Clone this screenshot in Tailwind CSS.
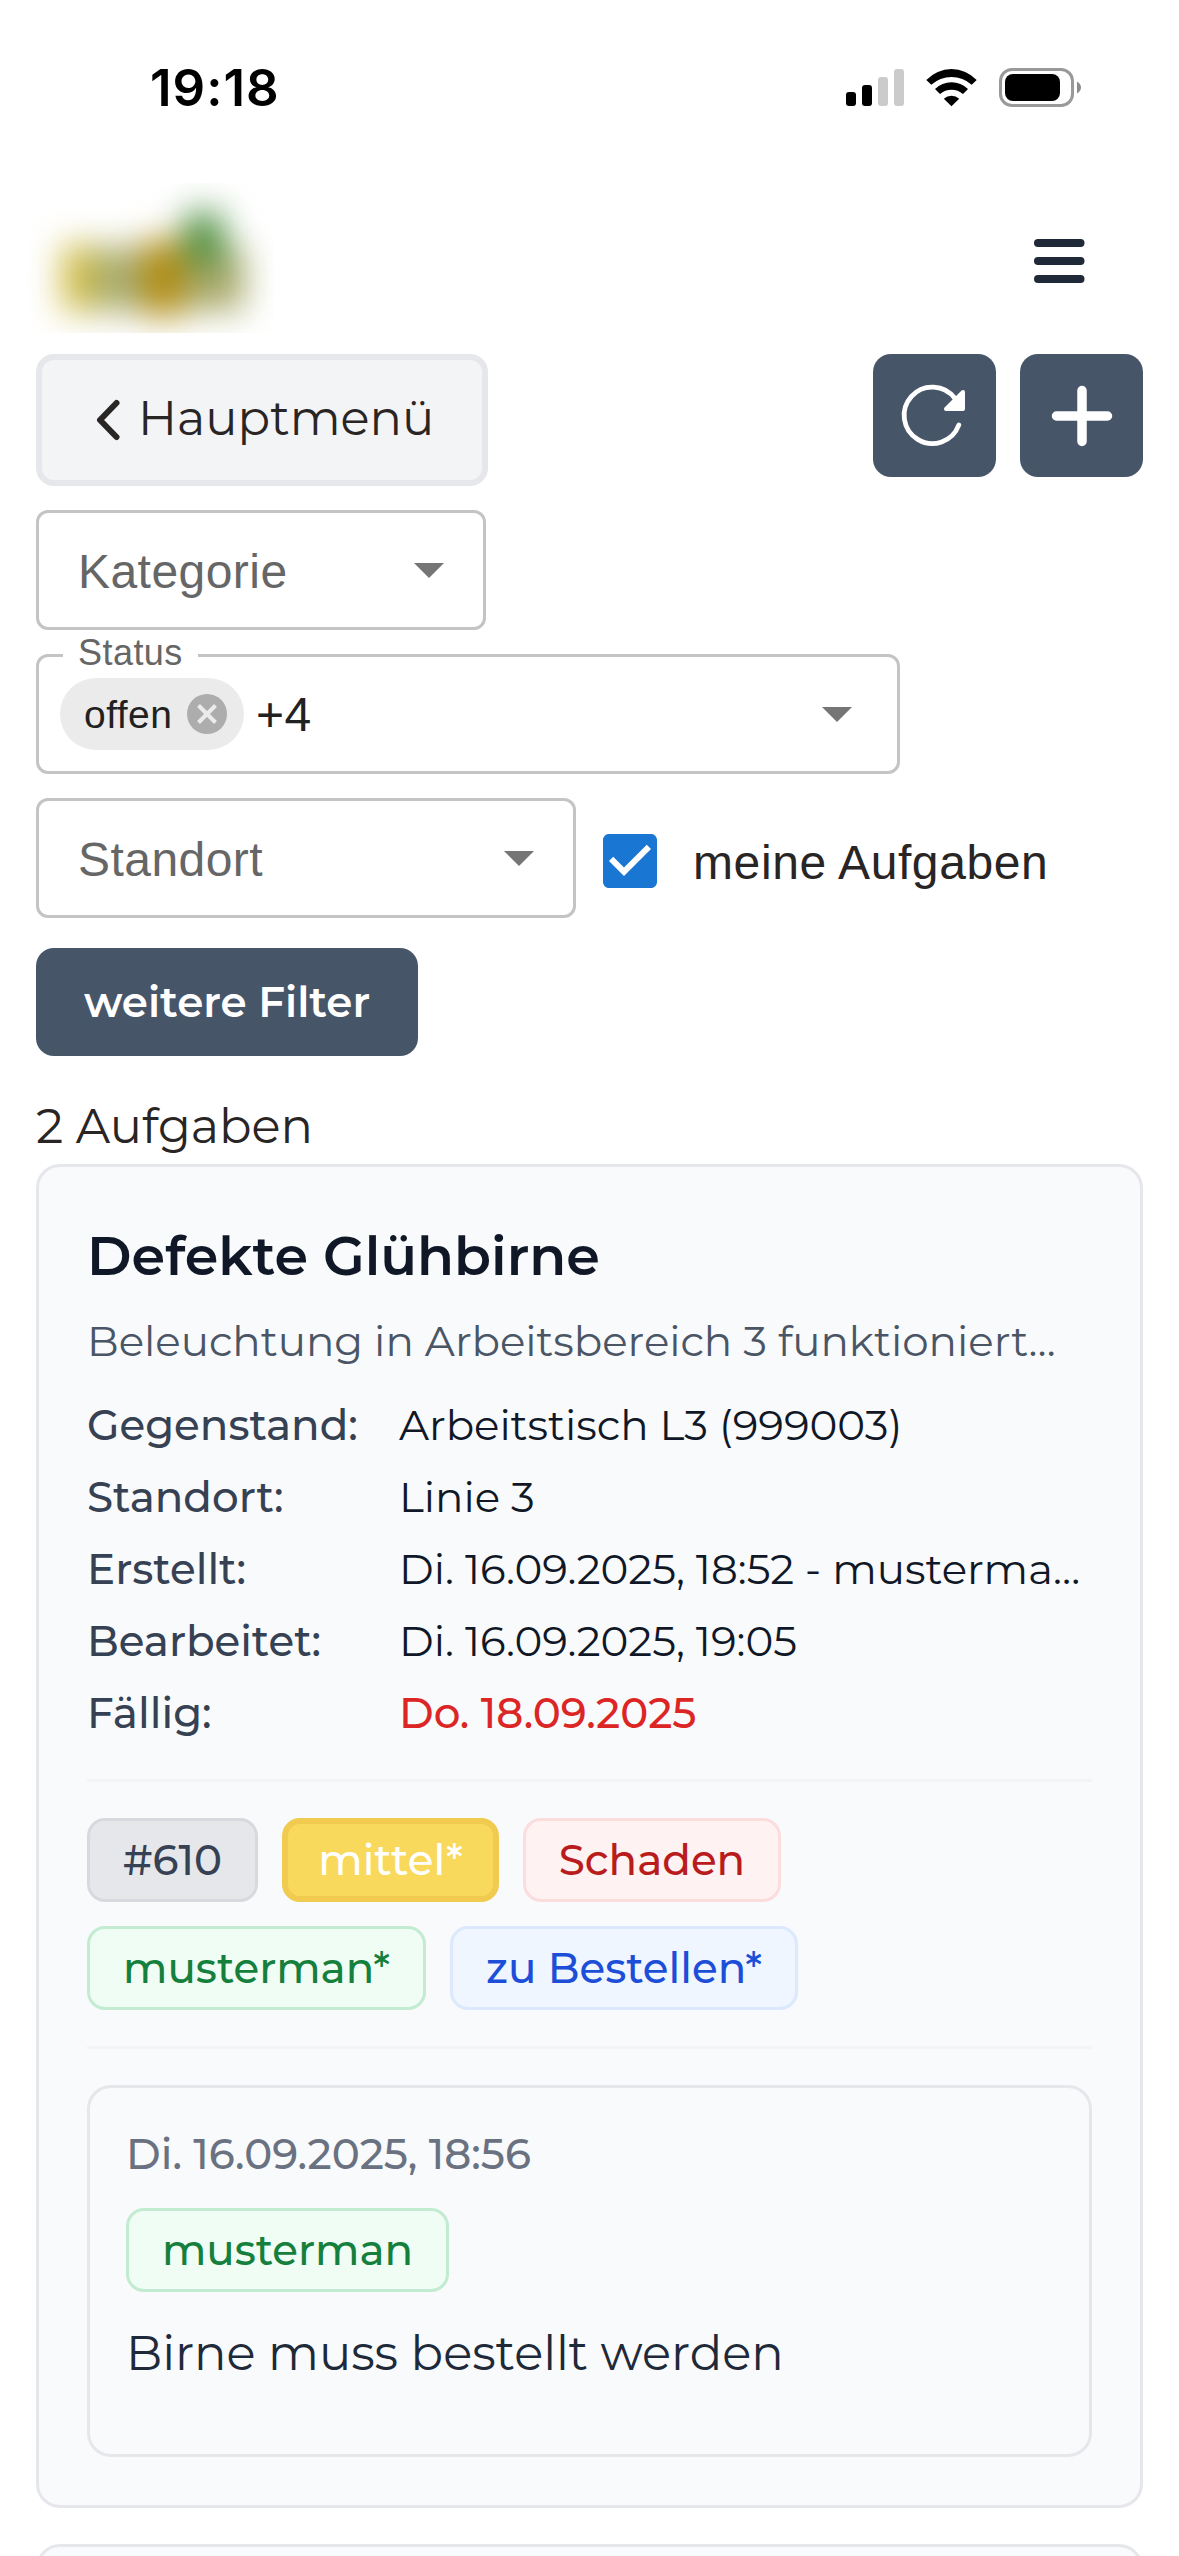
<!DOCTYPE html>
<html lang="de">
<head>
  <meta charset="UTF-8" />
  <meta name="viewport" content="width=device-width, initial-scale=1.0" />
  <title>Aufgaben</title>
  <script src="https://cdn.jsdelivr.net/npm/@tailwindcss/browser@4"></script>
</head>
<body class="h-[2556px] w-[1179px] overflow-hidden bg-white font-['Montserrat','Inter',sans-serif] text-[48px] leading-[72px] text-[#292524]">
  <!-- Status bar -->
  <div class="flex h-[177px] items-start justify-between pl-[150px] pr-[98px] pt-[57px]">
    <span class="font-['Inter',sans-serif] text-[51px] font-semibold leading-[62px] tracking-[1px] text-black">19:18</span>
    <svg class="mt-[11px] h-[39px] w-[235px]" viewBox="846 68 235 39">
      <rect x="846" y="92" width="10" height="14" rx="3" />
      <rect x="862" y="85" width="10" height="21" rx="3" />
      <rect x="878" y="77" width="10" height="29" rx="3" fill="#cbcbcb" />
      <rect x="894" y="69" width="10" height="37" rx="3" fill="#cbcbcb" />
      <path d="M926.3 80A34.5 34.5 0 0 1 976.7 80L971.7 84.7A30 30 0 0 0 931.3 84.7Z" />
      <path d="M935 89A23.5 23.5 0 0 1 968 89L963 94A17.5 17.5 0 0 0 940 94Z" />
      <path d="M943.8 98.7A11.5 11.5 0 0 1 959.2 98.7L951.5 106.3Z" />
      <rect x="1000.5" y="69.5" width="72" height="36" rx="11.5" fill="none" stroke="#999" stroke-width="3" />
      <rect x="1005" y="74" width="55" height="27" rx="8" />
      <path d="M1077 81.5Q1081 84 1081 87.5T1077 93.5Z" fill="#8c8c8c" />
    </svg>
  </div>

  <!-- Header -->
  <header class="flex h-[177px] items-start justify-between pl-[28px] pr-[94px]">
    <svg class="mt-[6px] h-[150px] w-[246px] overflow-hidden" viewBox="28 183 246 150">
      <defs>
        <filter id="logoBlur" filterUnits="userSpaceOnUse" x="-40" y="100" width="390" height="320" color-interpolation-filters="sRGB">
          <feGaussianBlur stdDeviation="17" />
        </filter>
      </defs>
      <g filter="url(#logoBlur)">
        <rect x="62" y="245" width="32" height="66" fill="#d0bc44" />
        <rect x="94" y="247" width="50" height="64" fill="#a8ac70" />
        <rect x="144" y="240" width="38" height="76" fill="#b48a0c" />
        <rect x="182" y="248" width="62" height="62" fill="#a6a868" />
        <path d="M182 262L186 212H220L228 262Z" fill="#488c3c" />
      </g>
    </svg>
    <svg class="mt-[62px] h-[44px] w-[51px]" viewBox="0 0 51 44" fill="#1f2937">
      <rect y="0" width="50.5" height="8" rx="4" />
      <rect y="18" width="50.5" height="8" rx="4" />
      <rect y="36" width="50.5" height="8" rx="4" />
    </svg>
  </header>

  <main class="px-[36px]">
    <div class="flex items-start justify-between">
      <button class="flex h-[132px] w-[452px] items-center rounded-[18px] border-[6px] border-gray-200 bg-gray-100 pb-[4px] pl-[54px]">
        <svg class="mt-[4px] h-[42px] w-[25px]" viewBox="0 0 25 42" fill="none" stroke="#292524" stroke-width="6" stroke-linecap="round" stroke-linejoin="round">
          <path d="M20.5 4L4 21L20.5 38" />
        </svg>
        <span class="ml-[17px]">Hauptmenü</span>
      </button>
      <div class="flex gap-[24px]">
        <button class="flex size-[123px] items-center justify-center rounded-[18px] bg-[#475569]">
          <svg class="size-[123px]" viewBox="873 354 123 123" fill="none">
            <path d="M955 398.5A28.2 28.2 0 1 0 958.8 425" stroke="#fff" stroke-width="4.8" stroke-linecap="round" />
            <path d="M963 392V409H946Z" fill="#fff" stroke="#fff" stroke-width="4" stroke-linejoin="round" />
          </svg>
        </button>
        <button class="flex size-[123px] items-center justify-center rounded-[18px] bg-[#475569]">
          <svg class="size-[62px]" viewBox="0 0 62 62" stroke="#fff" stroke-width="9.5" stroke-linecap="round">
            <path d="M31 5.5V56.5M5.5 31H56.5" />
          </svg>
        </button>
      </div>
    </div>

    <!-- Filter -->
    <div class="mt-[24px] flex flex-col gap-[24px] font-['Liberation_Sans',Arial,sans-serif] tracking-[0.45px] text-[#666]">
      <div class="flex h-[120px] w-[450px] items-center justify-between rounded-[12px] border-[3px] border-[#c4c4c4] px-[39px]">
        <span class="pt-[3px]">Kategorie</span>
        <svg class="h-[15px] w-[30px]" viewBox="0 0 30 15" fill="#757575"><path d="M0 0H30L15 15Z" /></svg>
      </div>
      <div class="relative flex h-[120px] w-[864px] items-center justify-between rounded-[12px] border-[3px] border-[#c4c4c4] pl-[21px] pr-[45px]">
        <span class="absolute left-[24px] top-[-25px] bg-white pl-[15px] pr-[15px] text-[36px] leading-[42px]">Status</span>
        <div class="flex items-center text-[#212121]">
          <span class="flex h-[72px] w-[184px] items-center justify-between rounded-full bg-[#ebebeb] pl-[24px] pr-[17px] text-[39px]">
            <span class="pt-[2px]">offen</span>
            <svg class="size-[40px]" viewBox="0 0 40 40">
              <circle cx="20" cy="20" r="20" fill="#adadad" />
              <path d="M11.5 11.5L28.5 28.5M28.5 11.5L11.5 28.5" stroke="#ebebeb" stroke-width="4" />
            </svg>
          </span>
          <span class="ml-[12px] pt-[2px]">+4</span>
        </div>
        <svg class="h-[15px] w-[30px]" viewBox="0 0 30 15" fill="#757575"><path d="M0 0H30L15 15Z" /></svg>
      </div>
      <div class="flex items-start">
        <div class="flex h-[120px] w-[540px] items-center justify-between rounded-[12px] border-[3px] border-[#c4c4c4] px-[39px]">
          <span class="pt-[3px]">Standort</span>
          <svg class="h-[15px] w-[30px]" viewBox="0 0 30 15" fill="#757575"><path d="M0 0H30L15 15Z" /></svg>
        </div>
        <label class="ml-[18px] mt-[27px] flex h-[72px] items-center text-[#292524]">
          <svg class="size-[72px]" viewBox="0 0 24 24" fill="#1976d2">
            <path d="M19 3H5c-1.11 0-2 .9-2 2v14c0 1.1.89 2 2 2h14c1.11 0 2-.9 2-2V5c0-1.1-.89-2-2-2zm-9 14l-5-5 1.41-1.41L10 14.17l7.59-7.59L19 8l-9 9z" />
          </svg>
          <span class="ml-[27px] pt-[3px] tracking-[0.6px]">meine Aufgaben</span>
        </label>
      </div>
    </div>

    <button class="mt-[30px] flex h-[108px] w-[382px] items-center justify-center rounded-[18px] bg-[#475569] text-[42px] font-semibold text-white">weitere Filter</button>

    <p class="mb-[2px] mt-[34px]">2 Aufgaben</p>

    <!-- Aufgabe -->
    <article class="rounded-[24px] border-[3px] border-gray-200 bg-gray-50 p-[48px] text-[42px] leading-[60px]">
      <h2 class="pt-[1px] text-[54px] font-semibold leading-[81px] text-gray-900">Defekte Glühbirne</h2>
      <p class="mt-[14px] text-gray-600">Beleuchtung in Arbeitsbereich 3 funktioniert…</p>
      <dl class="mt-[24px] grid grid-cols-[312px_1fr] gap-y-[12px] whitespace-nowrap text-gray-900">
        <dt class="font-medium text-gray-700">Gegenstand:</dt>
        <dd>Arbeitstisch L3 (999003)</dd>
        <dt class="font-medium text-gray-700">Standort:</dt>
        <dd>Linie 3</dd>
        <dt class="font-medium text-gray-700">Erstellt:</dt>
        <dd>Di. 16.09.2025, 18:52 - musterma…</dd>
        <dt class="font-medium text-gray-700">Bearbeitet:</dt>
        <dd>Di. 16.09.2025, 19:05</dd>
        <dt class="font-medium text-gray-700">Fällig:</dt>
        <dd class="font-medium text-[#dc2626]">Do. 18.09.2025</dd>
      </dl>

      <div class="mt-[36px] flex flex-wrap gap-[24px] border-y-[3px] border-gray-100 py-[36px] font-medium">
        <span class="flex h-[84px] w-[171px] items-center justify-center rounded-[18px] border-[3px] border-[#d7d9de] bg-gray-200 text-gray-700">#610</span>
        <span class="flex h-[84px] w-[217px] items-center justify-center rounded-[18px] border-[6px] border-[#f0cb4f] bg-[#f8d95b] text-white">mittel*</span>
        <span class="mr-[200px] flex h-[84px] w-[258px] items-center justify-center rounded-[18px] border-[3px] border-[#fbdddd] bg-[#fef2f2] text-[#b91c1c]">Schaden</span>
        <span class="flex h-[84px] w-[339px] items-center justify-center rounded-[18px] border-[3px] border-[#c3ebd1] bg-[#f0fdf4] text-[#15803d]">musterman*</span>
        <span class="flex h-[84px] w-[348px] items-center justify-center rounded-[18px] border-[3px] border-[#dbe8fe] bg-[#eff6ff] text-[#1d4ed8]">zu Bestellen*</span>
      </div>

      <div class="mt-[36px] h-[372px] rounded-[24px] border-[3px] border-gray-200 p-[36px]">
        <p class="font-medium text-gray-500">Di. 16.09.2025, 18:56</p>
        <span class="mt-[24px] flex h-[84px] w-[323px] items-center justify-center rounded-[18px] border-[3px] border-[#c3ebd1] bg-[#f0fdf4] font-medium text-[#15803d]">musterman</span>
        <p class="mt-[25px] text-[48px] leading-[72px] text-gray-800">Birne muss bestellt werden</p>
      </div>
    </article>

    <!-- next card, cut off by the viewport -->
    <div class="mt-[36px] h-[12px] overflow-hidden">
      <article class="h-[60px] rounded-[24px] border-[3px] border-gray-200 bg-gray-50"></article>
    </div>
  </main>
</body>
</html>
